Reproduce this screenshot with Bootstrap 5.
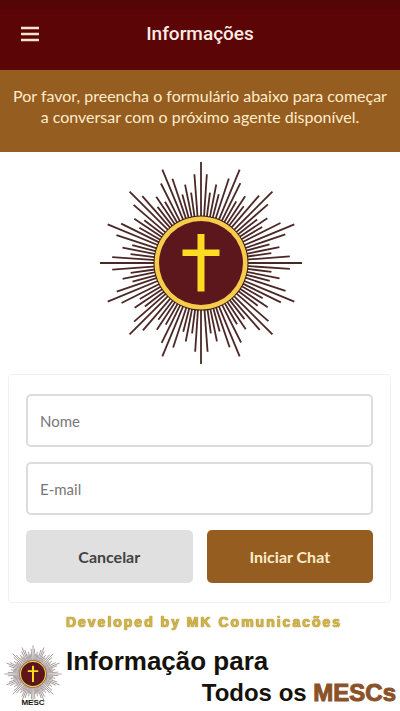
<!DOCTYPE html>
<html lang="pt-BR">
<head>
<meta charset="utf-8">
<meta name="viewport" content="width=device-width, initial-scale=1">
<title>Informações</title>
<link href="https://cdn.jsdelivr.net/npm/bootstrap@5.3.0/dist/css/bootstrap.min.css" rel="stylesheet">
<style>
body { font-family: Lato, "Open Sans", sans-serif; background: #fff; }
.topbar { background: linear-gradient(#540606 9px, #5c0506 9px); min-height: 70px; padding-bottom: 2px; display: grid; grid-template-columns: 60px 1fr 60px; }
.topbar h1 { font: 500 19px/24px Roboto, sans-serif; color: #fdece4; }
.menu-btn { color: #fbe3d2; border: 0; background: none; }
.intro { background: #965d20; color: #fdeccb; font-size: 16px; line-height: 21px; padding: 15px 10px 25px; }
.emblem-area { padding: 9px 0; }
.emblem { width: 204px; }
.form-panel { border: 1px solid #f1f1f1; border-radius: 4px; margin: 0 9px 0 8px; padding: 19px 17px; row-gap: 15px; }
.form-panel .form-control { height: 53px; border: 2px solid #dcdcdc; border-radius: 5px; font-size: 15px; padding: 0 12px; color: #444; box-shadow: none; }
.form-panel .form-control::placeholder { color: #777; opacity: 1; }
.form-actions { gap: 14px; }
.form-panel .btn { flex: 1 1 0; height: 53px; border: 0; border-radius: 5px; font-size: 16px; font-weight: 700; }
.btn-cancel, .btn-cancel:hover { background: #e0e0e0; color: #424242; }
.btn-start, .btn-start:hover { background: #965d20; color: #fdeccb; }
.brand { font-family: "Liberation Sans", Arial, sans-serif; font-weight: 700; color: #15110b; }
.credit { font-size: 14px; line-height: 18px; letter-spacing: 2px; color: #d3b54c; text-shadow: 0 0 1px #a08420, 0 0 1px #a08420; margin: 10px 0 14px 8px; }
.slogan { font-size: 26px; line-height: 32px; }
.slogan-end { font-size: 24px; line-height: 32px; }
.gold { color: #8a5228; -webkit-text-stroke: 1px #8a5228; }
.seal { width: 58px; }
.seal-name { font-size: 8px; line-height: 8px; margin-top: -4px; }
</style>
<script src="https://cdn.jsdelivr.net/npm/bootstrap@5.3.0/dist/js/bootstrap.bundle.min.js"></script>
</head>
<body>
<header class="topbar align-items-center">
  <button class="menu-btn d-flex p-0 ms-3 ps-1" type="button" aria-label="Menu">
    <svg width="20" height="16" viewBox="0 0 20 16" stroke="currentColor" stroke-width="2.6"><path d="M1 2h18M1 8h18M1 14h18"/></svg>
  </button>
  <h1 class="m-0 text-center">Informações</h1>
</header>
<main>
  <p class="intro text-center m-0">Por favor, preencha o formulário abaixo para começar a conversar com o próximo agente disponível.</p>
  <div class="emblem-area">
    <svg class="emblem d-block mx-auto" viewBox="-103 -102 204 204" role="img" aria-label="Cruz com raios">
      <defs>
        <g id="rays">
          <path d="M0-45V-101"/>
          <path transform="rotate(3.75)" d="M0-45V-89"/>
          <path transform="rotate(7.25)" d="M0-45V-71"/>
          <path transform="rotate(11)" d="M0-45V-80"/>
          <path transform="rotate(14.5)" d="M0-45V-71"/>
          <path transform="rotate(18.25)" d="M0-45V-89"/>
        </g>
        <g id="quarter">
          <use href="#rays"/><use href="#rays" transform="rotate(22.5)"/><use href="#rays" transform="rotate(45)"/><use href="#rays" transform="rotate(67.5)"/>
        </g>
        <g id="burst">
          <use href="#quarter"/><use href="#quarter" transform="rotate(90)"/><use href="#quarter" transform="rotate(180)"/><use href="#quarter" transform="rotate(270)"/>
        </g>
        <g id="disc">
          <circle r="47.5" fill="#3c1712"/><circle r="46.5" fill="#f6cd4b"/><circle r="42" fill="#5b171b"/>
          <path d="M-3.500-29h7v15.500h15v6.500h-15v35.500h-7v-35.500h-15v-6.500h15z" fill="#fddb22"/>
        </g>
      </defs>
      <use href="#burst" stroke="#4a2826" stroke-width="1.800"/>
      <use href="#disc"/>
    </svg>
  </div>
  <form class="form-panel d-grid">
    <input class="form-control" type="text" placeholder="Nome" aria-label="Nome">
    <input class="form-control" type="email" placeholder="E-mail" aria-label="E-mail">
    <div class="form-actions d-flex">
      <button class="btn btn-cancel" type="button">Cancelar</button>
      <button class="btn btn-start" type="submit">Iniciar Chat</button>
    </div>
  </form>
</main>
<footer class="brand">
  <p class="credit text-center">Developed by MK Comunicacões</p>
  <div class="d-flex">
    <div class="text-center ms-1">
      <svg class="seal d-block" viewBox="-102 -102 204 204" aria-hidden="true"><use href="#burst" stroke="#8f7f80" stroke-width="2.500"/><use href="#disc"/></svg>
      <div class="seal-name">MESC</div>
    </div>
    <div class="flex-grow-1">
      <div class="slogan ms-1">Informação para</div>
      <div class="slogan-end text-end me-1">Todos os <span class="gold">MESCs</span></div>
    </div>
  </div>
</footer>
</body>
</html>
